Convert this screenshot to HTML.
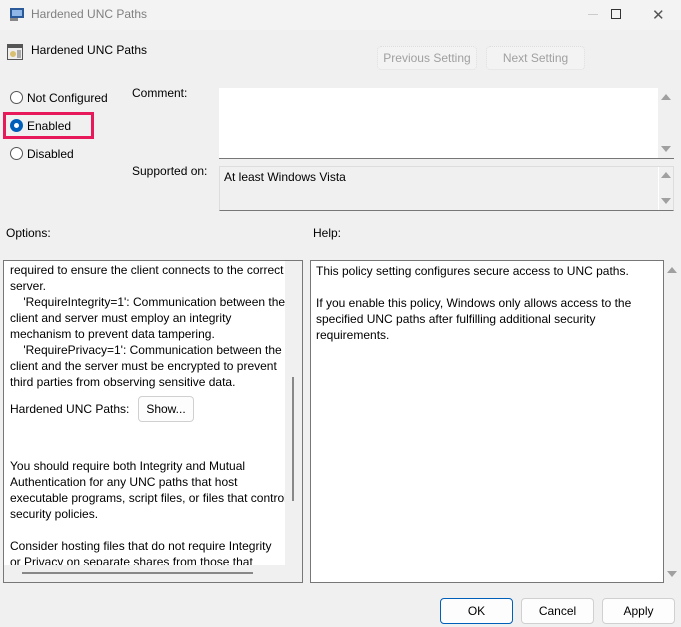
<!DOCTYPE html>
<html><head><style>
*{margin:0;padding:0;box-sizing:border-box}
body{width:681px;height:627px;background:#f0f0f0;font-family:"Liberation Sans",sans-serif;font-size:12px;color:#000;position:relative;overflow:hidden}
.a{position:absolute;white-space:nowrap}
.title{left:0;top:0;width:681px;height:30px;background:#f3f3f3}
.btn{position:absolute;border:1px solid #d0d0d0;border-radius:4px;background:#fdfdfd;text-align:center;line-height:22px;font-size:12px}
.dis{background:#f3f3f3;border:1px dotted #ddd;color:#a0a0a0}
.radio{position:absolute;width:13px;height:13px;border:1px solid #555;border-radius:50%;background:#fff}
.box{position:absolute;border:1px solid #777}
.arrow{position:absolute;width:0;height:0;border-left:5px solid transparent;border-right:5px solid transparent}
.up{border-bottom:6px solid #a0a0a0}.dn{border-top:6px solid #a0a0a0}
.txt{line-height:16px;white-space:nowrap}
</style></head><body>
<div class="a title"></div>
<svg class="a" style="left:9px;top:6px" width="16" height="16"><rect x="1" y="2" width="14" height="10" fill="#2a5a9a"/><rect x="3" y="4" width="10" height="6" fill="#8fb8e8"/><rect x="1" y="12" width="8" height="3" fill="#888"/></svg>
<div class="a" style="left:31px;top:7px;color:#808080;font-size:12px">Hardened UNC Paths</div>
<div class="a" style="left:588px;top:14px;width:10px;height:1px;background:#ccc"></div>
<div class="a" style="left:611px;top:9px;width:10px;height:10px;border:1px solid #333"></div>
<div class="a" style="left:652px;top:6px;color:#555;font-size:15px">✕</div>
<svg class="a" style="left:7px;top:44px" width="16" height="16"><rect x="0.5" y="0.5" width="15" height="15" fill="#eee" stroke="#555"/><rect x="1" y="1" width="14" height="3" fill="#555"/><circle cx="6" cy="10" r="3" fill="#d8c070"/><rect x="10" y="6" width="4" height="8" fill="#aaa"/></svg>
<div class="a" style="left:31px;top:43px">Hardened UNC Paths</div>
<div class="btn dis" style="left:377px;top:46px;width:100px;height:24px">Previous Setting</div>
<div class="btn dis" style="left:486px;top:46px;width:99px;height:24px">Next Setting</div>
<div class="radio" style="left:10px;top:91px"></div>
<div class="a" style="left:27px;top:91px">Not Configured</div>
<div class="a" style="left:3px;top:112px;width:91px;height:27px;border:3px solid #e8195a"></div>
<div class="radio" style="left:10px;top:119px;border:4px solid #005fb8;background:#fff"></div>
<div class="a" style="left:27px;top:119px">Enabled</div>
<div class="radio" style="left:10px;top:147px"></div>
<div class="a" style="left:27px;top:147px">Disabled</div>
<div class="a" style="left:132px;top:86px">Comment:</div>
<div class="a" style="left:219px;top:88px;width:455px;height:71px;background:#fff;border-bottom:1px solid #777"></div>
<div class="a" style="left:658px;top:88px;width:16px;height:70px;background:#f0f0f0"></div>
<div class="arrow up" style="left:661px;top:94px"></div><div class="arrow dn" style="left:661px;top:146px"></div>
<div class="a" style="left:132px;top:164px">Supported on:</div>
<div class="a" style="left:219px;top:166px;width:455px;height:45px;border:1px solid #ddd;border-bottom:1px solid #777;background:#f0f0f0"></div>
<div class="a" style="left:658px;top:167px;width:1px;height:43px;background:#fff"></div>
<div class="a" style="left:224px;top:170px">At least Windows Vista</div>
<div class="arrow up" style="left:661px;top:172px"></div><div class="arrow dn" style="left:661px;top:198px"></div>
<div class="a" style="left:6px;top:226px">Options:</div>
<div class="a" style="left:313px;top:226px">Help:</div>
<div class="box" style="left:3px;top:260px;width:300px;height:323px;background:#f0f0f0"></div>
<div class="a" style="left:4px;top:261px;width:281px;height:304px;background:#fff;overflow:hidden">
<div class="txt" style="padding-left:6px;margin-top:1px">required to ensure the client connects to the correct<br>server.<br>&nbsp;&nbsp;&nbsp;&nbsp;'RequireIntegrity=1': Communication between the<br>client and server must employ an integrity<br>mechanism to prevent data tampering.<br>&nbsp;&nbsp;&nbsp;&nbsp;'RequirePrivacy=1': Communication between the<br>client and the server must be encrypted to prevent<br>third parties from observing sensitive data.</div>
<div class="a" style="left:6px;top:141px">Hardened UNC Paths:</div>
<div class="btn" style="left:134px;top:135px;width:56px;height:26px;line-height:24px">Show...</div>
<div class="txt a" style="left:6px;top:197px">You should require both Integrity and Mutual<br>Authentication for any UNC paths that host<br>executable programs, script files, or files that control<br>security policies.<br><br>Consider hosting files that do not require Integrity<br>or Privacy on separate shares from those that</div>
</div>
<div class="a" style="left:292px;top:377px;width:2px;height:124px;background:#888"></div>
<div class="a" style="left:22px;top:572px;width:231px;height:2px;background:#888"></div>
<div class="box" style="left:310px;top:260px;width:354px;height:323px;background:#fff"></div>
<div class="txt a" style="left:316px;top:263px">This policy setting configures secure access to UNC paths.<br><br>If you enable this policy, Windows only allows access to the<br>specified UNC paths after fulfilling additional security<br>requirements.</div>
<div class="arrow up" style="left:667px;top:267px"></div><div class="arrow dn" style="left:667px;top:571px"></div>
<div class="btn" style="left:440px;top:598px;width:73px;height:26px;line-height:24px;border-color:#005fb8">OK</div>
<div class="btn" style="left:521px;top:598px;width:73px;height:26px;line-height:24px">Cancel</div>
<div class="btn" style="left:602px;top:598px;width:73px;height:26px;line-height:24px">Apply</div>
</body></html>
